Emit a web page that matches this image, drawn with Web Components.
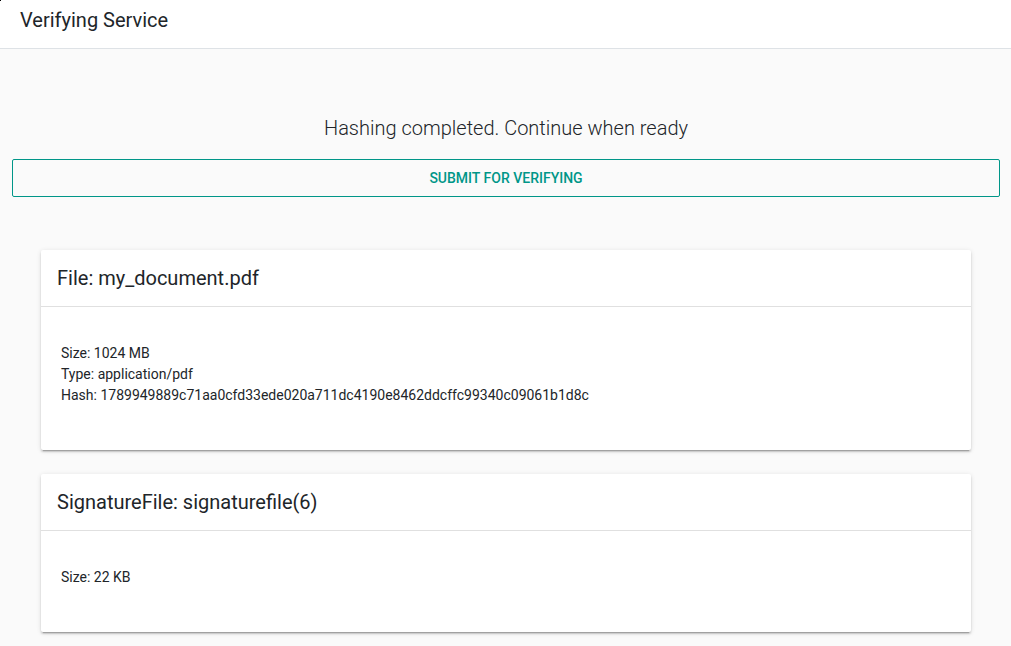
<!DOCTYPE html>
<html lang="en">
<head>
<meta charset="utf-8">
<meta name="viewport" content="width=device-width, initial-scale=1">
<title>Verifying Service</title>
<style>
  body { margin: 0; min-height: 100vh; background: #fafafa; color: #212529; font-family: Roboto, sans-serif; font-size: 14px; line-height: 21px; }
</style>
</head>
<body>
<verify-page>
  <app-header>Verifying Service</app-header>
  <submit-panel label="Submit for verifying">Hashing completed. Continue when ready</submit-panel>
  <file-card>
    <span slot="title">File: my_document.pdf</span>
    <div>Size: 1024 MB</div>
    <div>Type: application/pdf</div>
    <div>Hash: 1789949889c71aa0cfd33ede020a711dc4190e8462ddcffc99340c09061b1d8c</div>
  </file-card>
  <file-card>
    <span slot="title">SignatureFile: signaturefile(6)</span>
    <div>Size: 22 KB</div>
  </file-card>
</verify-page>
<script>
  function define(name, html, setup) {
    const template = document.createElement('template');
    template.innerHTML = html;
    customElements.define(name, class extends HTMLElement {
      constructor() {
        super();
        this.attachShadow({ mode: 'open' }).append(template.content.cloneNode(true));
      }
      connectedCallback() {
        if (setup) setup(this);
      }
    });
  }

  define('verify-page', `
    <style>
      :host { display: flex; flex-direction: column; }
      ::slotted(file-card) { margin: 0 40px 24px 41px; }
    </style>
    <slot></slot>`);

  define('app-header', `
    <style>
      :host { display: block; position: relative; background: #fff; border-bottom: 1px solid #dee2e6; padding: 4px 20px 12px; }
      :host::before { content: ""; position: absolute; top: 0; left: 0; width: 1px; height: 1px; background: #000; }
      h1 { margin: 0; font-size: 20px; font-weight: 400; line-height: 32px; }
    </style>
    <h1><slot></slot></h1>`);

  define('submit-panel', `
    <style>
      :host { display: block; padding: 67px 11px 53px 12px; }
      p { margin: 0 0 19px; font-size: 20px; font-weight: 300; line-height: 24px; text-align: center; }
      button { display: block; width: 100%; margin: 0; padding: 8px 16px; border: 1px solid #009688; border-radius: 2px; background: transparent; color: #009688; font: 500 14px/20px Roboto, sans-serif; text-transform: uppercase; cursor: pointer; }
    </style>
    <p><slot></slot></p>
    <button type="button"></button>`,
    el => { el.shadowRoot.querySelector('button').textContent = el.getAttribute('label'); });

  define('file-card', `
    <style>
      :host { display: block; background: #fff; border-radius: 2px; box-shadow: 0 3px 1px -2px rgba(0,0,0,.2), 0 2px 2px 0 rgba(0,0,0,.14), 0 1px 5px 0 rgba(0,0,0,.12); }
      h2 { margin: 0; padding: 16px; border-bottom: 1px solid #e0e0e0; font-size: 20px; font-weight: 400; line-height: 24px; }
      section { padding: 36px 20px 44px; overflow-wrap: anywhere; }
    </style>
    <h2><slot name="title"></slot></h2>
    <section><slot></slot></section>`);
</script>
</body>
</html>
